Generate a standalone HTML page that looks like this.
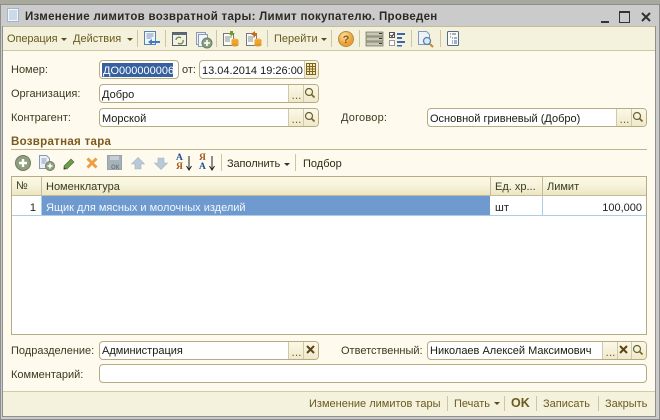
<!DOCTYPE html>
<html><head><meta charset="utf-8"><style>
html,body{margin:0;padding:0;width:660px;height:420px;overflow:hidden;background:#a8a89c}
body{position:relative;font-family:"Liberation Sans",sans-serif;font-size:11px;color:#3b3a20}
.a{position:absolute}
.t{position:absolute;white-space:nowrap;line-height:14px}
.f{position:absolute;box-sizing:border-box;background:#fff;border:1px solid #b5ac84;border-radius:4px;height:19px;overflow:hidden;color:#1a1a10}
.f span{position:absolute;left:2px;top:3px;line-height:14px;white-space:nowrap}
.b{position:absolute;box-sizing:border-box;top:0;height:17px;background:linear-gradient(#fbf8e8,#efe9cb);border-left:1px solid #cfc9a8;text-align:center;color:#7a6220;font-size:12px}
.sep{position:absolute;width:1px;background:#cbc6a4}
svg{position:absolute;overflow:visible}
.arr{position:absolute;width:0;height:0;border-left:3px solid transparent;border-right:3px solid transparent;border-top:3px solid #5a4a20}
.tb{color:#6a5a20}
</style></head><body>
<div class="a" style="left:0;top:4px;width:660px;height:416px;background:#8d8d8d"></div>
<div class="a" style="left:1px;top:5px;width:658px;height:414px;background:#cbcbcb"></div>
<div class="a" style="left:2px;top:26px;width:653px;height:25px;background:#f4f1dc;border-top:1px solid #c2bd98;border-bottom:1px solid #cdc8a6;box-sizing:border-box"></div>
<div class="a" style="left:2px;top:51px;width:653px;height:340px;background:#fefaee"></div>
<div class="a" style="left:2px;top:391px;width:653px;height:25px;box-sizing:border-box;background:#f4f1dc;border-top:1px solid #cfcaa8"></div>
<div class="a" style="left:655px;top:26px;width:1px;height:391px;background:#8f8f8f"></div>
<div class="a" style="left:2px;top:26px;width:1px;height:391px;background:#8f8f8f"></div>
<div class="a" style="left:2px;top:416px;width:654px;height:1px;background:#8f8f8f"></div>

<svg style="left:7px;top:8px" width="12" height="15"><rect x=".5" y=".5" width="11" height="13" fill="#f2f6fb" stroke="#9fb6d0"/><path d="M2 3h8M2 5h8M2 7h8M2 9h8M2 11h8" stroke="#a9bcd2"/></svg>
<div class="t" style="left:25px;top:10px;font-weight:bold;font-size:11.5px;color:#2d2a25;letter-spacing:.29px">Изменение лимитов возвратной тары: Лимит покупателю. Проведен</div>
<div class="a" style="left:601px;top:21px;width:8px;height:2px;background:#333"></div>
<div class="a" style="left:619px;top:11px;width:11px;height:12px;box-sizing:border-box;border:1px solid #333;border-top-width:2px"></div>
<svg style="left:641px;top:12px" width="10" height="10"><path d="M1 1l8 8M9 1L1 9" stroke="#333" stroke-width="2"/></svg>

<div class="t tb" style="left:7px;top:32px;letter-spacing:-.1px">Операция</div><div class="arr" style="left:61px;top:38px"></div>
<div class="t tb" style="left:73px;top:32px">Действия</div><div class="arr" style="left:127px;top:38px"></div>
<div class="sep" style="left:137px;top:30px;height:17px"></div>
<svg style="left:144px;top:31px" width="17" height="17"><rect x=".5" y=".5" width="11" height="13" fill="#f2f6fb" stroke="#5a82b0"/><path d="M2.500 3h7M2.500 5h7M2.500 7h5" stroke="#7a96b8"/><path d="M16 10H8V8l-4 3 4 3v-2h8z" fill="#3f7cc0"/></svg>
<div class="sep" style="left:165px;top:30px;height:17px"></div>
<svg style="left:172px;top:32px" width="15" height="14"><rect x=".5" y=".5" width="14" height="13" fill="#f3f1e4" stroke="#55606a"/><rect x="1" y="1" width="13" height="2" fill="#5d6a78"/><path d="M4 8a3 3 0 0 1 5-2M11 8a3 3 0 0 1-5 3" stroke="#6c8a3c" fill="none" stroke-width="1.300"/></svg>
<svg style="left:196px;top:32px" width="17" height="17"><rect x=".5" y=".5" width="9" height="12" fill="#eef2f8" stroke="#8a9cb4"/><rect x="2.500" y="2.500" width="9" height="12" fill="#f4f6fa" stroke="#8a9cb4"/><circle cx="11" cy="11" r="5" fill="#8aa27e" stroke="#6d7f66"/><path d="M11 8v6M8 11h6" stroke="#fff" stroke-width="1.600"/></svg>
<div class="sep" style="left:216px;top:30px;height:17px"></div>
<svg style="left:223px;top:31px" width="16" height="17"><rect x=".5" y="2.500" width="10" height="12" fill="#fbfbf3" stroke="#75797c"/><path d="M2 6h7M2 8h5M2 10h5" stroke="#8a8f94"/><path d="M7 0h3v2h2l-3.500 3L5 2h2z" fill="#6f9a2e"/><ellipse cx="12" cy="9" rx="3.500" ry="1.500" fill="#f2b23c"/><rect x="8.500" y="9" width="7" height="5" fill="#eda52c"/><ellipse cx="12" cy="14" rx="3.500" ry="1.500" fill="#e1962a"/></svg>
<svg style="left:246px;top:31px" width="16" height="17"><rect x=".5" y="2.500" width="10" height="12" fill="#fbfbf3" stroke="#75797c"/><path d="M2 6h7M2 8h5M2 10h5" stroke="#8a8f94"/><path d="M9 0v2h2v3H9v1L5 3z" fill="#c46a24"/><ellipse cx="12" cy="9" rx="3.500" ry="1.500" fill="#f2b23c"/><rect x="8.500" y="9" width="7" height="5" fill="#eda52c"/><ellipse cx="12" cy="14" rx="3.500" ry="1.500" fill="#e1962a"/></svg>
<div class="sep" style="left:267px;top:30px;height:17px"></div>
<div class="t tb" style="left:274px;top:32px">Перейти</div><div class="arr" style="left:321px;top:38px"></div>
<div class="sep" style="left:331px;top:30px;height:17px"></div>
<svg style="left:338px;top:31px" width="16" height="16"><defs><radialGradient id="g" cx=".4" cy=".3"><stop offset="0" stop-color="#fde5a8"/><stop offset="1" stop-color="#e9a23a"/></radialGradient></defs><circle cx="8" cy="8" r="7.500" fill="url(#g)" stroke="#bd8a3c"/><text x="8" y="12" text-anchor="middle" font-size="11" font-weight="bold" fill="#8a5a18" font-family="Liberation Sans">?</text></svg>
<div class="sep" style="left:359px;top:30px;height:17px"></div>
<svg style="left:366px;top:32px" width="17" height="14"><rect y="0" width="17" height="4" fill="#c9c7b4" stroke="#55564a" stroke-width=".6"/><rect y="5" width="17" height="4" fill="#c9c7b4" stroke="#55564a" stroke-width=".6"/><rect y="10" width="17" height="4" fill="#c9c7b4" stroke="#55564a" stroke-width=".6"/><path d="M13 1.500h3M13 6.500h3M13 11.500h3" stroke="#333"/></svg>
<svg style="left:389px;top:32px" width="17" height="14"><rect x=".5" y=".5" width="5" height="5" fill="#fff" stroke="#555"/><path d="M1.500 3l1.500 1.500L5 1.500" stroke="#222" fill="none"/><rect x=".5" y="8.500" width="5" height="5" fill="#fff" stroke="#999"/><path d="M8 1h8v2H8zM8 5h5v2H8zM8 9h8v2H8zM8 13h5v1.500H8z" fill="#3f66a8"/></svg>
<div class="sep" style="left:411px;top:30px;height:17px"></div>
<svg style="left:418px;top:31px" width="16" height="17"><path d="M.5.500h8l3 3v10H.5z" fill="#eef2f8" stroke="#8299b8"/><circle cx="9" cy="10" r="3.500" fill="#d9ebf6" stroke="#5b82a8" stroke-width="1.300"/><path d="M12 13l3 3" stroke="#c98a2c" stroke-width="2"/></svg>
<div class="sep" style="left:440px;top:30px;height:17px"></div>
<svg style="left:447px;top:31px" width="13" height="16"><rect x=".5" y=".5" width="11" height="14" rx="1" fill="#fbfbf3" stroke="#556a84"/><path d="M3 3h1M3 6h1M5 7h1M5 10h1M5 12h1M5 3h4M7 7h3M7 10h3M7 12h3" stroke="#3f66a8"/></svg>

<div class="t" style="left:11px;top:63px">Номер:</div>
<div class="f" style="left:99px;top:60px;width:80px"><div class="a" style="left:2px;top:2px;width:71px;height:14px;background:#36609e"></div><span style="color:#fff;left:3px">ДО000000006</span></div>
<div class="t" style="left:182px;top:63px">от:</div>
<div class="f" style="left:199px;top:60px;width:120px"><span>13.04.2014 19:26:00</span><div class="b" style="left:104px;width:15px"></div></div>
<svg style="left:306px;top:63px" width="10" height="12"><rect x=".5" y=".5" width="9" height="11" fill="#f5e9bb" stroke="#7d6220"/><path d="M0 3.500h10M0 6h10M0 8.500h10M3.500 1v10M6.500 1v10" stroke="#7d6220"/></svg>

<div class="t" style="left:11px;top:87px">Организация:</div>
<div class="f" style="left:99px;top:84px;width:220px"><span>Добро</span><div class="b" style="left:188px;width:16px;line-height:20px">...</div><div class="b" style="left:203px;width:16px"></div></div>
<svg style="left:304px;top:87px" width="12" height="12"><circle cx="5" cy="5" r="3.500" fill="none" stroke="#6a6230" stroke-width="1.200"/><path d="M7.500 7.500l3 3" stroke="#7d6220" stroke-width="1.600"/></svg>

<div class="t" style="left:11px;top:111px">Контрагент:</div>
<div class="f" style="left:99px;top:108px;width:220px"><span>Морской</span><div class="b" style="left:188px;width:16px;line-height:20px">...</div><div class="b" style="left:203px;width:16px"></div></div>
<svg style="left:304px;top:111px" width="12" height="12"><circle cx="5" cy="5" r="3.500" fill="none" stroke="#6a6230" stroke-width="1.200"/><path d="M7.500 7.500l3 3" stroke="#7d6220" stroke-width="1.600"/></svg>

<div class="t" style="left:341px;top:111px;letter-spacing:.2px">Договор:</div>
<div class="f" style="left:427px;top:108px;width:220px"><span>Основной гривневый (Добро)</span><div class="b" style="left:188px;width:16px;line-height:20px">...</div><div class="b" style="left:203px;width:16px"></div></div>
<svg style="left:632px;top:111px" width="12" height="12"><circle cx="5" cy="5" r="3.500" fill="none" stroke="#6a6230" stroke-width="1.200"/><path d="M7.500 7.500l3 3" stroke="#7d6220" stroke-width="1.600"/></svg>

<div class="t" style="left:11px;top:135px;font-weight:bold;color:#7a5a1c;font-size:11.5px;letter-spacing:.3px">Возвратная тара</div>
<div class="a" style="left:11px;top:149px;width:636px;height:1px;background:#bcb48c"></div>

<svg style="left:15px;top:155px" width="17" height="17"><circle cx="8" cy="8" r="7.500" fill="#8f9f7c" stroke="#75786a"/><path d="M8 4v8M4 8h8" stroke="#fff" stroke-width="2.400"/></svg>
<svg style="left:39px;top:155px" width="17" height="17"><path d="M.5.500h7l3 3v10H.5z" fill="#eef2f8" stroke="#8299b8"/><path d="M2.500 4h5M2.500 6h5M2.500 8h4" stroke="#8299b8"/><circle cx="11" cy="11" r="4.500" fill="#8fa47c" stroke="#75786a"/><path d="M11 8.500v5M8.500 11h5" stroke="#fff" stroke-width="1.500"/></svg>
<svg style="left:63px;top:157px" width="13" height="13"><path d="M1 9L8 2l3 3-7 7-3 0z" fill="#6f9a4a" stroke="#4a6a30" stroke-width=".6"/><path d="M1 10l2 2-2.500.5z" fill="#333"/></svg>
<svg style="left:86px;top:157px" width="12" height="12"><path d="M1.500 1.500l9 9M10.500 1.500l-9 9" stroke="#ee9d44" stroke-width="3"/></svg>
<svg style="left:107px;top:155px" width="16" height="16"><rect x=".5" y=".5" width="14" height="14" fill="#a7b1b8" stroke="#99a2a8"/><rect x="3" y="1" width="9" height="4" fill="#c7cfd4"/><text x="4" y="14" font-size="6" font-weight="bold" fill="#6e7a80" font-family="Liberation Sans">ОК</text></svg>
<svg style="left:131px;top:157px" width="14" height="13"><path d="M7 .5L13.500 7H10v5H4V7H.5z" fill="#b8c9d8" stroke="#a9b4bc" stroke-width=".6"/></svg>
<svg style="left:154px;top:157px" width="14" height="13"><path d="M7 12.500L13.500 6H10V1H4v5H.5z" fill="#b8c9d8" stroke="#a9b4bc" stroke-width=".6"/></svg>
<div class="t" style="left:176px;top:154px;font:bold 9.500px/9px 'Liberation Serif',serif;color:#1f4e96">А<br><span style="color:#a0581c">Я</span></div>
<svg style="left:186px;top:156px" width="6" height="15"><path d="M3 0v13M.5 10L3 14l2.500-4" stroke="#222" fill="none"/></svg>
<div class="t" style="left:199px;top:154px;font:bold 9.500px/9px 'Liberation Serif',serif;color:#a0581c">Я<br><span style="color:#1f4e96">А</span></div>
<svg style="left:209px;top:156px" width="6" height="15"><path d="M3 0v13M.5 10L3 14l2.500-4" stroke="#222" fill="none"/></svg>
<div class="sep" style="left:221px;top:154px;height:17px"></div>
<div class="t" style="left:227px;top:157px;color:#2f2c18;letter-spacing:-.1px">Заполнить</div><div class="arr" style="left:284px;top:163px;border-top-color:#333"></div>
<div class="sep" style="left:295px;top:154px;height:17px"></div>
<div class="t" style="left:303px;top:157px;color:#2f2c18">Подбор</div>

<div class="a" style="left:11px;top:176px;width:636px;height:159px;box-sizing:border-box;background:#fff;border:1px solid #b5ac84"></div>
<div class="a" style="left:12px;top:177px;width:634px;height:19px;background:linear-gradient(#fbf8e6 0,#f6f2da 50%,#ece6c2 100%);border-bottom:1px solid #c2bc98;box-sizing:border-box"></div>
<div class="a" style="left:41px;top:177px;width:1px;height:19px;background:#c2bc98"></div>
<div class="a" style="left:490px;top:177px;width:1px;height:19px;background:#c2bc98"></div>
<div class="a" style="left:542px;top:177px;width:1px;height:19px;background:#c2bc98"></div>
<div class="t" style="left:16px;top:179px">№</div>
<div class="t" style="left:46px;top:180px">Номенклатура</div>
<div class="t" style="left:495px;top:180px">Ед. хр...</div>
<div class="t" style="left:547px;top:180px">Лимит</div>
<div class="a" style="left:12px;top:196px;width:634px;height:20px;background:#fff;border-bottom:1px solid #aacde8;box-sizing:border-box"></div>
<div class="a" style="left:42px;top:196px;width:448px;height:19px;background:#6f9ad0"></div>
<div class="a" style="left:41px;top:196px;width:1px;height:19px;background:#aacde8"></div>
<div class="a" style="left:542px;top:196px;width:1px;height:19px;background:#aacde8"></div>
<div class="t" style="right:624px;top:201px;color:#222">1</div>
<div class="t" style="left:46px;top:201px;color:#f4f7fb">Ящик для мясных и молочных изделий</div>
<div class="t" style="left:495px;top:201px;color:#222">шт</div>
<div class="t" style="right:18px;top:201px;color:#222">100,000</div>

<div class="t" style="left:11px;top:344px">Подразделение:</div>
<div class="f" style="left:99px;top:341px;width:220px"><span style="top:2px">Администрация</span><div class="b" style="left:188px;width:16px;line-height:20px">...</div><div class="b" style="left:203px;width:16px"></div></div>
<svg style="left:306px;top:345px" width="9" height="9"><path d="M1 1l7 7M8 1L1 8" stroke="#5d4515" stroke-width="2"/></svg>

<div class="t" style="left:341px;top:344px">Ответственный:</div>
<div class="f" style="left:427px;top:341px;width:220px"><span style="top:2px">Николаев Алексей Максимович</span><div class="b" style="left:174px;width:16px;line-height:20px">...</div><div class="b" style="left:189px;width:15px"></div><div class="b" style="left:203px;width:16px"></div></div>
<svg style="left:619px;top:345px" width="9" height="9"><path d="M1 1l7 7M8 1L1 8" stroke="#5d4515" stroke-width="2"/></svg>
<svg style="left:632px;top:344px" width="12" height="12"><circle cx="5" cy="5" r="3.500" fill="none" stroke="#6a6230" stroke-width="1.200"/><path d="M7.500 7.500l3 3" stroke="#7d6220" stroke-width="1.600"/></svg>

<div class="t" style="left:11px;top:368px">Комментарий:</div>
<div class="f" style="left:99px;top:364px;width:548px"></div>

<div class="t tb" style="left:309px;top:397px">Изменение лимитов тары</div>
<div class="sep" style="left:447px;top:396px;height:15px"></div>
<div class="t tb" style="left:454px;top:397px">Печать</div><div class="arr" style="left:494px;top:402px"></div>
<div class="sep" style="left:504px;top:396px;height:15px"></div>
<div class="t tb" style="left:511px;top:396px;font-weight:bold;font-size:12.500px">OK</div>
<div class="sep" style="left:536px;top:396px;height:15px"></div>
<div class="t tb" style="left:543px;top:397px">Записать</div>
<div class="sep" style="left:598px;top:396px;height:15px"></div>
<div class="t tb" style="left:605px;top:397px">Закрыть</div>
</body></html>
